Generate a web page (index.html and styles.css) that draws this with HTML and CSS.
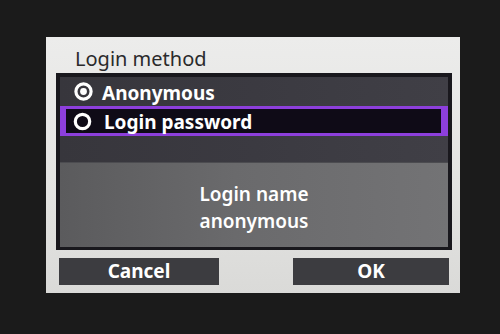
FILE: index.html
```html
<!DOCTYPE html>
<html lang="en">
<head>
<meta charset="utf-8">
<title>Login method</title>
<link rel="stylesheet" href="styles.css">
</head>
<body>
<div class="screen">
  <div class="panel">
    <div class="title">Login method</div>
    <div class="box">
      <div class="list">
        <div class="row">
          <svg class="radio" viewBox="0 0 19 19" width="19" height="19"><circle cx="9.5" cy="9.5" r="7.6" fill="none" stroke="#fff" stroke-width="3.2"/><circle cx="9.5" cy="9.5" r="3.4" fill="#fff"/></svg>
          <span class="label">Anonymous</span>
        </div>
        <div class="row selected">
          <svg class="radio" viewBox="0 0 19 19" width="19" height="19"><circle cx="9.5" cy="9.5" r="7.2" fill="none" stroke="#fff" stroke-width="3.2"/></svg>
          <span class="label">Login password</span>
        </div>
      </div>
      <div class="info">
        <div class="info-line">Login name</div>
        <div class="info-line">anonymous</div>
      </div>
    </div>
    <div class="buttons">
      <div class="btn btn-cancel">Cancel</div>
      <div class="btn btn-ok">OK</div>
    </div>
  </div>
</div>
</body>
</html>
```

FILE: styles.css
```css
html, body {
  margin: 0;
  padding: 0;
  background: #1b1b1b;
  width: 500px;
  height: 334px;
  overflow: hidden;
  font-family: "Noto Sans", "Open Sans", sans-serif;
}

.screen {
  padding: 37px 0 0 46px;
}

.panel {
  width: 414px;
  height: 256px;
  box-sizing: border-box;
  background: linear-gradient(180deg, #ececeb 0%, #e3e3e1 60%, #dadad8 100%);
  display: flex;
  flex-direction: column;
}

.title {
  height: 36px;
  box-sizing: border-box;
  padding: 12px 0 0 29px;
  font-size: 20px;
  line-height: 20px;
  color: #2a2a2c;
}

.box {
  margin-left: 10px;
  width: 396px;
  height: 177px;
  box-sizing: border-box;
  border: solid #19181d;
  border-width: 4px 4px 3px 4px;
  background: #1d1c21;
  display: flex;
  flex-direction: column;
}

.list {
  height: 85px;
  background: linear-gradient(90deg, #37363c 0%, #3b3a41 50%, #403f46 100%);
  display: flex;
  flex-direction: column;
}

.row {
  height: 29px;
  display: flex;
  align-items: center;
  padding-left: 14px;
  gap: 9px;
  color: #fff;
  font-size: 19px;
  font-weight: 700;
}

.row .label {
  line-height: 19px;
  padding-top: 3px;
}

.row.selected {
  height: 30px;
  box-sizing: border-box;
  border: solid #8d3fdc;
  border-width: 3px 7px 3px 6px;
  background: #0f0b17;
  padding-left: 7px;
  gap: 12px;
}

.radio {
  flex: none;
}

.info {
  flex: 1;
  background: linear-gradient(90deg, #5b5b5d 0%, #6a6a6c 45%, #737375 100%);
  border-top: 1px solid #4c4c50;
  display: flex;
  flex-direction: column;
  align-items: center;
  justify-content: center;
  padding-top: 5px;
  color: #fff;
  font-size: 19px;
  font-weight: 600;
}

.info-line {
  line-height: 27px;
}

.buttons {
  display: flex;
  margin: 8px 0 0 13px;
}

.btn {
  height: 27px;
  background: #3c3c40;
  color: #fff;
  font-size: 19px;
  font-weight: 700;
  line-height: 27px;
  text-align: center;
}

.btn-cancel {
  width: 160px;
}

.btn-ok {
  width: 156px;
  margin-left: 74px;
}
```
